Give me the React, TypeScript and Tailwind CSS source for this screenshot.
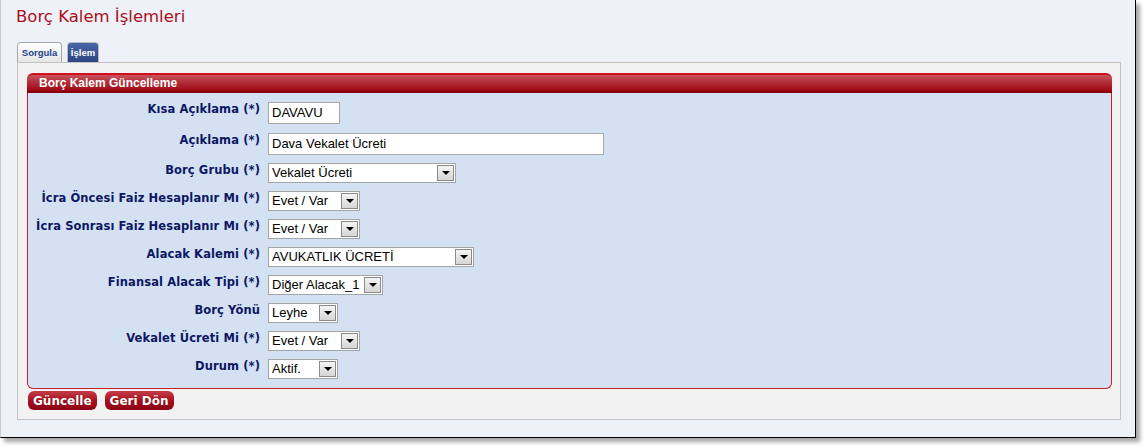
import React from "react";

type Row = {
  label: string;
  kind: "input" | "select";
  value: string;
  width: number;
  height: number;
};

// form rows, top to bottom
const rows: Row[] = [
  { label: "Kısa Açıklama (*)", kind: "input", value: "DAVAVU", width: 72, height: 31 },
  { label: "Açıklama (*)", kind: "input", value: "Dava Vekalet Ücreti", width: 336, height: 30 },
  { label: "Borç Grubu (*)", kind: "select", value: "Vekalet Ücreti", width: 188, height: 28 },
  { label: "İcra Öncesi Faiz Hesaplanır Mı (*)", kind: "select", value: "Evet / Var", width: 92, height: 28 },
  { label: "İcra Sonrası Faiz Hesaplanır Mı (*)", kind: "select", value: "Evet / Var", width: 92, height: 28 },
  { label: "Alacak Kalemi (*)", kind: "select", value: "AVUKATLIK ÜCRETİ", width: 206, height: 28 },
  { label: "Finansal Alacak Tipi (*)", kind: "select", value: "Diğer Alacak_1", width: 115, height: 28 },
  { label: "Borç Yönü", kind: "select", value: "Leyhe", width: 70, height: 28 },
  { label: "Vekalet Ücreti Mi (*)", kind: "select", value: "Evet / Var", width: 92, height: 28 },
  { label: "Durum (*)", kind: "select", value: "Aktif.", width: 70, height: 28 },
];

function TextBox({ value, width }: { value: string; width: number }) {
  return (
    <div
      className="h-[22px] border border-[#a9a9a9] bg-white px-[3px] flex items-center text-[13px] text-black font-['Liberation_Sans',Arial,sans-serif]"
      style={{ width }}
    >
      {value}
    </div>
  );
}

function SelectBox({ value, width }: { value: string; width: number }) {
  return (
    <div
      className="h-[20px] border border-[#a5a5a5] bg-white flex items-stretch text-[13px] text-black font-['Liberation_Sans',Arial,sans-serif]"
      style={{ width }}
    >
      <div className="flex-1 flex items-center pl-[3px] overflow-hidden whitespace-nowrap">{value}</div>
      <div className="w-[17px] m-[1px] border border-[#8a8a8a] bg-gradient-to-b from-[#f4f4f4] to-[#d6d6d6] flex items-center justify-center">
        <div className="w-0 h-0 border-l-[4px] border-r-[4px] border-t-[4px] border-l-transparent border-r-transparent border-t-black" />
      </div>
    </div>
  );
}

function RedButton({ children }: { children: React.ReactNode }) {
  return (
    <div className="h-[19px] px-[5px] rounded-[6px] bg-gradient-to-b from-[#c63a48] via-[#a8101f] to-[#8c0516] flex items-center text-white text-[12px] font-bold font-['DejaVu_Sans',Verdana,sans-serif] [text-shadow:0_0_1px_#5a0008]">
      {children}
    </div>
  );
}

export default function App() {
  return (
    <div className="w-[1145px] h-[447px] bg-white relative">
      <div className="w-[1136px] h-[438px] bg-[#eef2f8] border-l border-l-[#c8ccd2] border-r border-b border-r-black border-b-black shadow-[4px_4px_4px_rgba(0,0,0,0.35)] flex flex-col">
        <h1 className="mt-[6px] ml-[15px] h-[22px] text-[16.5px] leading-[22px] text-[#a80f1a] font-['DejaVu_Sans',Verdana,sans-serif]">
          Borç Kalem İşlemleri
        </h1>

        {/* tabs */}
        <div className="mt-[14px] ml-[16px] flex items-end gap-[5px] h-[20px]">
          <div className="w-[45px] h-[20px] rounded-t-[4px] border border-b-0 border-[#a8a8a8] bg-gradient-to-b from-white to-[#e6e6e6] flex items-center justify-center pt-[1px] text-[9.5px] font-bold text-[#1d3f8a] font-['Liberation_Sans',Tahoma,sans-serif]">
            Sorgula
          </div>
          <div className="w-[32px] h-[20px] rounded-t-[4px] border border-b-0 border-[#b8bcc4] bg-gradient-to-b from-[#4a66a6] to-[#2c4683] flex items-center justify-center pt-[1px] text-[9.5px] font-bold text-white font-['Liberation_Sans',Tahoma,sans-serif]">
            İşlem
          </div>
        </div>

        {/* panel */}
        <div className="ml-[16px] w-[1104px] h-[358px] border border-[#c3c3c3] bg-[#f2f2f2] pt-[10px] pl-[9px]">
          <div className="w-[1085px] h-[316px] flex flex-col">
            <div className="h-[20px] rounded-t-[6px] border-t-2 border-[#d0101e] bg-gradient-to-b from-[#c6545e] via-[#b02a36] to-[#9c0010] border-b-2 border-b-[#8a000c] flex items-center pl-[12px] text-white text-[12px] font-bold font-['Liberation_Sans',Arial,sans-serif]">
              Borç Kalem Güncelleme
            </div>
            <div className="flex-1 bg-[#d4e1f2] border border-t-0 border-[#c8202e] rounded-b-[6px] pt-[9px]">
              {rows.map((r) => (
                <div key={r.label} className="flex" style={{ height: r.height }}>
                  <div className="w-[232px] text-right text-[11.5px] leading-[14px] tracking-[0.1px] font-bold text-[#0d1763] font-['DejaVu_Sans',Verdana,sans-serif] whitespace-nowrap">
                    {r.label}
                  </div>
                  <div className="ml-[8px]">
                    {r.kind === "input" ? (
                      <TextBox value={r.value} width={r.width} />
                    ) : (
                      <SelectBox value={r.value} width={r.width} />
                    )}
                  </div>
                </div>
              ))}
            </div>
          </div>
          <div className="mt-[2px] ml-[1px] flex gap-[8px]">
            <RedButton>Güncelle</RedButton>
            <RedButton>Geri Dön</RedButton>
          </div>
        </div>
      </div>
    </div>
  );
}
